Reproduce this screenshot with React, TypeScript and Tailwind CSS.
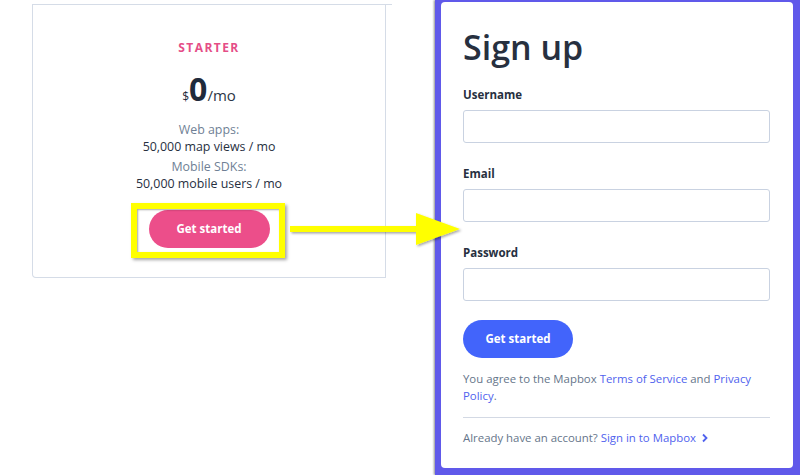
import React from 'react';

const font = { fontFamily: '"Open Sans", "Liberation Sans", sans-serif' };

const Field: React.FC<{ label: string; first?: boolean }> = ({ label, first }) => (
  <div className={first ? 'mt-[20px]' : 'mt-[23px]'}>
    <div className="text-[11.5px] leading-[16px] font-bold text-[#27303f]">{label}</div>
    <div className="mt-[7px] h-[33px] w-[307px] rounded-[3px] border border-[#c9d2e1] bg-white" />
  </div>
);

const App: React.FC = () => {
  return (
    <div className="relative flex h-[475px] w-[800px] overflow-hidden bg-white" style={font}>
      {/* Pricing card */}
      <div className="ml-[32px] mt-[4px] w-[360px] self-start border-t border-[#d5dce7]">
        <div className="flex h-[273px] w-[354px] flex-col items-center rounded-bl-[4px] border-b border-l border-r border-[#d5dce7] pt-[35px]">
          <div className="text-[12px] font-bold leading-[16px] tracking-[0.12em] text-[#e54e87]">STARTER</div>
          <div className="mt-[13px] flex items-baseline text-[#1f2a3b]">
            <span className="text-[12px] leading-none">$</span>
            <span className="text-[32px] font-bold leading-[40px]">0</span>
            <span className="text-[15px] leading-none text-[#2c3646]">/mo</span>
          </div>
          <div className="mt-[12px] text-center text-[12.4px] leading-[17px]">
            <div className="text-[#6f7f95]">Web apps:</div>
            <div className="text-[#27303f]">50,000 map views / mo</div>
          </div>
          <div className="mt-[3px] text-center text-[12.4px] leading-[17px]">
            <div className="text-[#6f7f95]">Mobile SDKs:</div>
            <div className="text-[#27303f]">50,000 mobile users / mo</div>
          </div>
          <div className="relative mt-[18px]">
            <button className="h-[38px] w-[121px] rounded-full bg-[#ec4e8a] text-[11.5px] font-bold text-white">
              Get started
            </button>
            <div className="absolute -left-[18px] -top-[7px] h-[55px] w-[154px] border-[6px] border-[#ffff00] shadow-[2px_2px_3px_rgba(0,0,0,0.35),inset_1px_1px_2px_rgba(0,0,0,0.35)]" />
          </div>
        </div>
      </div>

      {/* Sign up panel */}
      <div className="ml-[43px] h-full w-[365px] bg-[#6059ea] pb-[7px] pl-[6px] pr-[7px] pt-[2px] shadow-[-1px_0_2px_rgba(0,0,0,0.45)]">
        <div className="h-full rounded-[4px] bg-white pl-[22px] pr-[23px] pt-[25px]">
          <h1 className="text-[34px] font-semibold leading-[40px] text-[#27303f]">Sign up</h1>
          <Field label="Username" first />
          <Field label="Email" />
          <Field label="Password" />
          <button className="mt-[19px] h-[38px] w-[110px] rounded-full bg-[#4264fb] text-[11.5px] font-bold text-white">
            Get started
          </button>
          <p className="mt-[12px] text-[11.4px] leading-[17px] text-[#66758a]">
            You agree to the Mapbox <span className="text-[#5062ee]">Terms of Service</span> and{' '}
            <span className="text-[#5062ee]">Privacy Policy</span>.
          </p>
          <div className="mt-[13px] h-px w-[307px] bg-[#d3d9e4]" />
          <div className="mt-[11px] flex items-center text-[11.4px] leading-[17px] text-[#66758a]">
            Already have an account?&nbsp;<span className="text-[#5062ee]">Sign in to Mapbox</span>
            <svg className="ml-[5px]" width="8" height="10" viewBox="0 0 8 10" fill="none">
              <path d="M2 1.5 L5.5 5 L2 8.5" stroke="#5062ee" strokeWidth="1.8" />
            </svg>
          </div>
        </div>
      </div>

      {/* Annotation arrow */}
      <svg className="pointer-events-none absolute left-[286px] top-[208px]" width="180" height="44" viewBox="0 0 180 44">
        <defs>
          <filter id="sh" x="-10%" y="-30%" width="130%" height="170%">
            <feDropShadow dx="1.5" dy="1.5" stdDeviation="1.2" floodColor="#000" floodOpacity="0.35" />
          </filter>
        </defs>
        <g filter="url(#sh)" fill="#ffff00">
          <rect x="4" y="18" width="130" height="6" />
          <polygon points="130,5 174,21 130,37" />
        </g>
      </svg>
    </div>
  );
};

export default App;
